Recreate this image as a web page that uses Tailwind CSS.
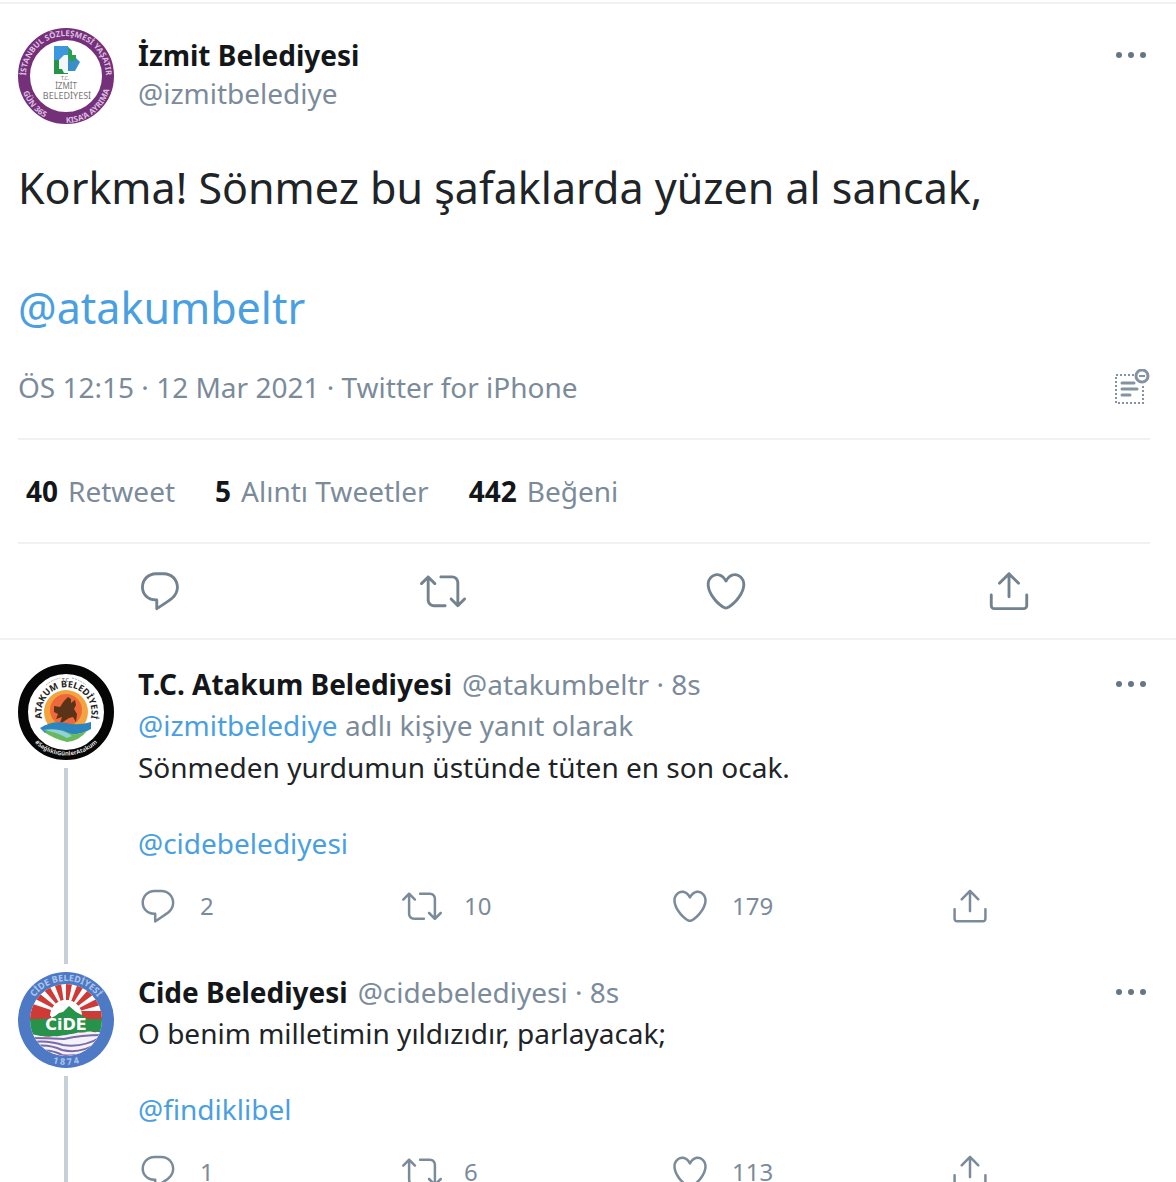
<!DOCTYPE html>
<html lang="tr">

<head>
  <meta charset="UTF-8">
  <meta name="viewport" content="width=device-width, initial-scale=1.0">
  <title>İzmit Belediyesi</title>
  <script src="https://cdn.jsdelivr.net/npm/@tailwindcss/browser@4"></script>
</head>

<body class="h-screen overflow-hidden bg-white font-['Noto_Sans',sans-serif] text-[#202427]">

  <!-- icons -->
  <svg class="hidden">
    <symbol id="reply" viewBox="0 0 24 24">
      <path d="M14.046 2.242l-4.148-.01h-.002c-4.374 0-7.8 3.427-7.8 7.802 0 4.098 3.186 7.206 7.465 7.37v3.828c0 .108.044.286.12.403.142.225.384.347.632.347.138 0 .277-.038.402-.118.264-.168 6.473-4.14 8.088-5.506 1.902-1.61 3.04-3.97 3.043-6.312v-.017c-.006-4.367-3.43-7.787-7.8-7.788zm3.787 12.972c-1.134.96-4.862 3.405-6.772 4.643V16.67c0-.414-.335-.75-.75-.75h-.396c-3.66 0-6.318-2.476-6.318-5.886 0-3.534 2.768-6.302 6.3-6.302l4.147.01h.002c3.532 0 6.3 2.766 6.302 6.296-.003 1.91-.942 3.844-2.514 5.176z" />
    </symbol>
    <symbol id="retweet" viewBox="0 0 24 24">
      <path d="M23.77 15.67c-.292-.293-.767-.293-1.06 0l-2.22 2.22V7.65c0-2.068-1.683-3.75-3.75-3.75h-5.85c-.414 0-.75.336-.75.75s.336.75.75.75h5.85c1.24 0 2.25 1.01 2.25 2.25v10.24l-2.22-2.22c-.293-.293-.768-.293-1.06 0s-.294.768 0 1.06l3.5 3.5c.145.147.337.22.53.22s.383-.072.53-.22l3.5-3.5c.294-.292.294-.767 0-1.06zm-10.66 3.28H7.26c-1.24 0-2.25-1.01-2.25-2.25V6.46l2.22 2.22c.148.147.34.22.532.22s.384-.073.53-.22c.293-.293.293-.768 0-1.06l-3.5-3.5c-.293-.294-.768-.294-1.06 0l-3.5 3.5c-.294.292-.294.767 0 1.06s.767.293 1.06 0l2.22-2.22V16.7c0 2.068 1.683 3.75 3.75 3.75h5.85c.414 0 .75-.336.75-.75s-.337-.75-.75-.75z" />
    </symbol>
    <symbol id="like" viewBox="0 0 24 24">
      <path d="M12 21.638h-.014C9.403 21.59 1.95 14.856 1.95 8.478c0-3.064 2.525-5.754 5.403-5.754 2.29 0 3.83 1.58 4.646 2.73.814-1.148 2.354-2.73 4.645-2.73 2.88 0 5.404 2.69 5.404 5.755 0 6.376-7.454 13.11-10.037 13.157H12zM7.354 4.225c-2.08 0-3.903 1.988-3.903 4.255 0 5.74 7.034 11.596 8.55 11.658 1.518-.062 8.55-5.917 8.55-11.658 0-2.267-1.823-4.255-3.903-4.255-2.528 0-3.94 2.936-3.952 2.965-.23.562-1.156.562-1.387 0-.014-.03-1.425-2.965-3.954-2.965z" />
    </symbol>
    <symbol id="share" viewBox="0 0 24 24">
      <path d="M17.53 7.47l-5-5c-.293-.293-.768-.293-1.06 0l-5 5c-.294.293-.294.768 0 1.06s.767.294 1.06 0l3.72-3.72V15c0 .414.336.75.75.75s.75-.336.75-.75V4.81l3.72 3.72c.146.147.338.22.53.22s.384-.072.53-.22c.293-.293.293-.767 0-1.06z" />
      <path d="M19.708 21.944H4.292C3.028 21.944 2 20.916 2 19.652V14c0-.414.336-.75.75-.75s.75.336.75.75v5.652c0 .437.355.792.792.792h15.416c.437 0 .792-.355.792-.792V14c0-.414.336-.75.75-.75s.75.336.75.75v5.652c0 1.264-1.028 2.292-2.292 2.292z" />
    </symbol>
    <symbol id="more" viewBox="0 0 32 8">
      <circle cx="4" cy="4" r="3" />
      <circle cx="16" cy="4" r="3" />
      <circle cx="28" cy="4" r="3" />
    </symbol>
  </svg>

  <main class="border-t-2 border-[#eff1f2] mt-0.5">
    <article class="pl-[18px] pr-[26px] pt-6">
      <header class="flex gap-6">
        <svg class="size-24 shrink-0" viewBox="0 0 96 96" role="img" aria-label="İzmit Belediyesi">
          <circle cx="48" cy="48" r="42" fill="#fff" stroke="#75307a" stroke-width="12" />
          <path id="izmitTop" d="M8 48a40 40 0 0 1 80 0" fill="none" />
          <path id="izmitBottom" d="M3 50a45 45 0 0 0 90 0" fill="none" />
          <g fill="#dcbfe0" font-family="Noto Sans" font-size="8" font-weight="700">
            <text><textPath href="#izmitTop" startOffset="50%" text-anchor="middle">İSTANBUL SÖZLEŞMESİ YAŞATIR</textPath></text>
            <text><textPath href="#izmitBottom" startOffset="10%">GÜN 365</textPath></text>
            <text><textPath href="#izmitBottom" startOffset="50%">KISA'A AYRIMA</textPath></text>
          </g>
          <path d="M36 18h14v28H36z" fill="#3d97dc" />
          <path d="M36 32h6l2 5h6v9H36z" fill="#249447" />
          <path d="M50 19l4 4v4h4v3l4 4-5 9h-7z" fill="#3b8fc9" />
          <path d="M50 19l4 4v4h4v4l-4 3-4-4z" fill="#2aa152" />
          <path d="M41 32l5-5h4v18h-4l-2-4h-3z" fill="#f4f7fa" />
          <g fill="#777" font-family="Noto Sans" text-anchor="middle">
            <text x="47" y="52" font-size="5">T.C.</text>
            <text x="48" y="61" font-size="8">İZMİT</text>
            <text x="49" y="71" font-size="9">BELEDİYESİ</text>
          </g>
        </svg>
        <div class="flex-1 pt-2 leading-[38px]">
          <h2 class="text-[28px] font-bold text-[#14171a]">İzmit Belediyesi</h2>
          <a href="#" class="block text-[28px] text-[#7b8b9a]">@izmitbelediye</a>
        </div>
        <button class="self-start pt-[23px] pr-[3px]" aria-label="Daha fazla">
          <svg class="w-8 h-2 fill-[#657786]"><use href="#more" /></svg>
        </button>
      </header>

      <p class="mt-[34px] text-[43px] leading-[60px]">Korkma! Sönmez bu şafaklarda yüzen al sancak,<br><br><a href="#" class="text-[#4a9fe2]">@atakumbeltr</a></p>

      <div class="flex items-center justify-between h-[58px] mt-5 mb-[22px] text-[28px] text-[#7b8b9a]">
        <p>ÖS 12:15 · 12 Mar 2021 · Twitter for iPhone</p>
        <svg class="size-9" viewBox="0 0 36 36" fill="none" stroke="#8493a1">
          <path d="M20 6H2v28h27V16" stroke-width="2" stroke-dasharray="2 2" />
          <path d="M8 14h12M8 20h15M8 26h8" stroke-width="3" stroke-linecap="round" />
          <circle cx="28" cy="7" r="6" stroke-width="3" />
          <path d="M25 7h6" stroke-width="2" />
        </svg>
      </div>

      <div class="flex items-center gap-10 h-[106px] px-2 border-y-2 border-[#eff1f2] text-[28px] text-[#7b8b9a]">
        <a href="#" class="flex gap-2.5"><b class="text-[#14171a]">40</b> Retweet</a>
        <a href="#" class="flex gap-2.5"><b class="text-[#14171a]">5</b> Alıntı Tweetler</a>
        <a href="#" class="flex gap-2.5"><b class="text-[#14171a]">442</b> Beğeni</a>
      </div>

      <div class="grid grid-cols-4 justify-items-center items-center h-[94px] fill-[#72828f]">
        <button aria-label="Yanıtla"><svg class="size-[46px]"><use href="#reply" /></svg></button>
        <button aria-label="Retweetle"><svg class="size-[46px]"><use href="#retweet" /></svg></button>
        <button aria-label="Beğen"><svg class="size-[46px]"><use href="#like" /></svg></button>
        <button aria-label="Paylaş"><svg class="size-[46px]"><use href="#share" /></svg></button>
      </div>
    </article>

    <section class="border-t-2 border-[#eff1f2] pl-[18px] pr-[26px] pt-6">
      <article class="flex gap-6 h-[308px]">
        <div class="flex flex-col items-center gap-2">
          <svg class="size-24 shrink-0" viewBox="0 0 96 96" role="img" aria-label="T.C. Atakum Belediyesi">
            <circle cx="48" cy="48" r="43" fill="#fff" stroke="#060606" stroke-width="10" />
            <path id="atakumTop" d="M27 61a25 25 0 1 1 43 0" fill="none" />
            <path id="atakumBottom" d="M4 56a45 45 0 0 0 88 0" fill="none" />
            <circle cx="48" cy="48" r="22" fill="#f3a43f" />
            <circle cx="48" cy="46" r="16" fill="#ee6839" />
            <path d="M36 42l6 1 4-6 4-4 3 2v4l4-3 1 5-2 4 3 5-1 8-3-5-4 1-6 4-3 1 2-6-6 2 2-5-4-2z" fill="#5b3318" />
            <path d="M22 64q12-8 26-5 12 3 25-1v7q-13 8-28 4-12-3-18 0z" fill="#2c86bd" />
            <path d="M26 68q14-5 25 1 8 3 18-2-8 10-20 11-13-3-23-10z" fill="#68b95b" />
            <path d="M25 66q18-3 29 6l-5 2q-10-6-24-8z" fill="#8fd2dc" />
            <g font-family="Noto Sans" font-weight="700">
              <text font-size="9" fill="#222"><textPath href="#atakumTop" startOffset="50%" text-anchor="middle">ATAKUM BELEDİYESİ</textPath></text>
              <text x="48" y="18" font-size="5" fill="#777" text-anchor="middle">T.C.</text>
              <text font-size="6" fill="#ddd"><textPath href="#atakumBottom" startOffset="50%" text-anchor="middle">#SağlıklıGünlerAtakum</textPath></text>
            </g>
            <path d="M28 21q6-5 14-7M54 14q8 2 14 7" fill="none" stroke="#aaa" stroke-dasharray="2 1" />
          </svg>
          <div class="flex-1 w-1 mb-2 bg-[#c6d0d8]"></div>
        </div>
        <div class="flex-1 text-[28px]">
          <div class="flex items-center justify-between h-10">
            <h3 class="flex gap-2.5"><b class="text-[#14171a]">T.C. Atakum Belediyesi</b> <span class="text-[#7b8b9a]">@atakumbeltr · 8s</span></h3>
            <button class="pr-[3px]" aria-label="Daha fazla"><svg class="w-8 h-2 fill-[#657786]"><use href="#more" /></svg></button>
          </div>
          <p class="leading-[42px] text-[#7b8b9a]"><a href="#" class="text-[#4a9fe2]">@izmitbelediye</a> adlı kişiye yanıt olarak</p>
          <p class="leading-[38px] pt-0.5">Sönmeden yurdumun üstünde tüten en son ocak.<br><br><a href="#" class="text-[#4a9fe2]">@cidebelediyesi</a></p>
          <div class="grid grid-cols-[264fr_268fr_280fr_200fr] mt-6 text-2xl text-[#7b8b9a] fill-[#7b8b9a]">
            <button class="flex items-center gap-[22px]"><svg class="size-10"><use href="#reply" /></svg>2</button>
            <button class="flex items-center gap-[22px]"><svg class="size-10"><use href="#retweet" /></svg>10</button>
            <button class="flex items-center gap-[22px]"><svg class="size-10"><use href="#like" /></svg>179</button>
            <button aria-label="Paylaş"><svg class="size-10"><use href="#share" /></svg></button>
          </div>
        </div>
      </article>

      <article class="flex gap-6 h-[308px]">
        <div class="flex flex-col items-center gap-2">
          <svg class="size-24 shrink-0" viewBox="0 0 96 96" role="img" aria-label="Cide Belediyesi">
            <clipPath id="cideInner"><circle cx="48" cy="48" r="36" /></clipPath>
            <circle cx="48" cy="48" r="48" fill="#4e79c4" />
            <path id="cideTop" d="M9 48a39 39 0 0 1 78 0" fill="none" />
            <path id="cideBottom" d="M3 48a45 45 0 0 0 90 0" fill="none" />
            <g clip-path="url(#cideInner)">
              <path d="M0 0h96v96H0z" fill="#fff" />
              <circle cx="48" cy="43" r="25" fill="none" stroke="#cf3a36" stroke-width="20" stroke-dasharray="5 4" />
              <path d="M12 39h21v8H12zM63 39h21v8H63z" fill="#cf3a36" />
              <path d="M32 44a16 16 0 0 1 32 0z" fill="#fff" />
              <path d="M10 47h18q8-1 13-6l4-1 6-6 7 6 6 3 6 4h16v14q-18-4-36 2-22 4-40-2z" fill="#26924a" />
              <path d="M10 62q18 5 38 1 20-5 38-2v30H10z" fill="#f5f1f8" />
              <path d="M12 66q18 0 34 1 18-4 40-4M14 70q16-2 31 3 20 3 38-8M17 74q14-2 27 4 18 4 34-6M20 79q13-2 24 4 12 2 28-3" fill="none" stroke="#796aaa" stroke-width="2" />
            </g>
            <g font-family="Noto Sans" font-weight="700">
              <text x="48" y="58" font-family="DejaVu Sans" font-size="16" fill="#fff" text-anchor="middle">CiDE</text>
              <text font-size="9" fill="#adc5eb"><textPath href="#cideTop" startOffset="50%" text-anchor="middle">CİDE BELEDİYESİ</textPath></text>
              <text font-size="9" fill="#adc5eb"><textPath href="#cideBottom" startOffset="50%" text-anchor="middle">1 8 7 4</textPath></text>
            </g>
          </svg>
          <div class="flex-1 w-1 mb-2 bg-[#c6d0d8]"></div>
        </div>
        <div class="flex-1 text-[28px]">
          <div class="flex items-center justify-between h-10">
            <h3 class="flex gap-2.5"><b class="text-[#14171a]">Cide Belediyesi</b> <span class="text-[#7b8b9a]">@cidebelediyesi · 8s</span></h3>
            <button class="pr-[3px]" aria-label="Daha fazla"><svg class="w-8 h-2 fill-[#657786]"><use href="#more" /></svg></button>
          </div>
          <p class="leading-[38px] pt-0.5">O benim milletimin yıldızıdır, parlayacak;<br><br><a href="#" class="text-[#4a9fe2]">@findiklibel</a></p>
          <div class="grid grid-cols-[264fr_268fr_280fr_200fr] mt-6 text-2xl text-[#7b8b9a] fill-[#7b8b9a]">
            <button class="flex items-center gap-[22px]"><svg class="size-10"><use href="#reply" /></svg>1</button>
            <button class="flex items-center gap-[22px]"><svg class="size-10"><use href="#retweet" /></svg>6</button>
            <button class="flex items-center gap-[22px]"><svg class="size-10"><use href="#like" /></svg>113</button>
            <button aria-label="Paylaş"><svg class="size-10"><use href="#share" /></svg></button>
          </div>
        </div>
      </article>
    </section>
  </main>

</body>

</html>
